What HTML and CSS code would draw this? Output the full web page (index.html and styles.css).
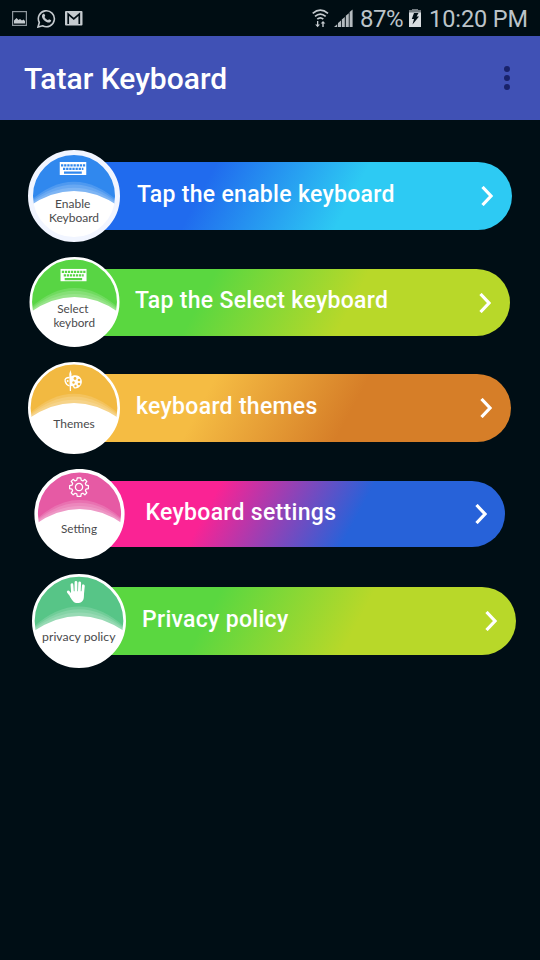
FILE: index.html
```html
<!DOCTYPE html>
<html lang="en">
<head>
    <meta charset="UTF-8">
    <meta name="viewport" content="width=device-width, initial-scale=1.0">
    <title>Tatar Keyboard</title>
    <link rel="stylesheet" href="styles.css">
</head>
<body>
    <!-- shapes shared by the round badges -->
    <svg class="defs" width="0" height="0">
        <defs>
            <clipPath id="round">
                <circle cx="46" cy="46" r="45"/>
            </clipPath>
            <symbol id="dome" viewBox="0 0 92 92">
                <circle cx="46" cy="46" r="45" fill="currentColor"/>
                <g fill="#fff" clip-path="url(#round)">
                    <path class="haze" d="M0 53 Q46 10.500 92 53 V92 H0Z"/>
                    <path class="haze" d="M0 54.500 Q46 14.500 92 54.500 V92 H0Z"/>
                    <path class="haze" d="M0 55.500 Q46 20 92 55.500 V92 H0Z"/>
                    <path d="M0 57 Q46 25 92 57 V92 H0Z"/>
                </g>
            </symbol>
            <symbol id="keys" viewBox="0 0 27 13">
                <rect width="27" height="13" fill="#fff"/>
                <g fill="none" stroke="currentColor">
                    <path d="M1.500 3.300H25.700" stroke-width="2.300" stroke-dasharray="2.300 .83"/>
                    <path d="M3.500 6.900H23.900" stroke-width="2.300" stroke-dasharray="2.300 .83"/>
                    <path d="M4.500 10.600H22.300" stroke-width="2.200"/>
                </g>
            </symbol>
        </defs>
    </svg>

    <div class="status-bar">
        <div class="notifications">
            <svg width="15" height="15" viewBox="0 0 15 15">
                <rect x=".6" y=".6" width="13.800" height="13.800" fill="none" stroke="#8d969c" stroke-width="1.200"/>
                <path d="M2 12.500V9.500L4.500 7L6.500 9L8 8L10 9.500L11.500 8.500L13 10V12.500Z" fill="#c5cbcf"/>
            </svg>
            <svg class="whatsapp" width="19" height="19" viewBox="0 0 19 19">
                <path d="M1 18L2.300 13.500A8 8 0 1 1 5.600 16.800Z" fill="none" stroke="#c5cbcf" stroke-width="1.600"/>
                <path d="M6 5C7 4.300 7.500 4.800 8.200 6.700L7.500 8C8.300 9.500 9.300 10.500 11 11.200L12 10.200L14.200 11.300C14 13.500 12 14 10 13.300C7.500 12.400 5.500 10 5 8C4.900 6.800 5.200 5.700 6 5Z" fill="#c5cbcf"/>
            </svg>
            <svg width="18" height="15" viewBox="0 0 18 15">
                <rect width="17.500" height="14.500" rx="1" fill="#c5cbcf"/>
                <path d="M3.200 13V3.200L8.750 8L14.300 3.200V13" fill="none" stroke="#000d14" stroke-width="1.700"/>
            </svg>
        </div>
        <div class="indicators">
            <svg width="17" height="19" viewBox="0 0 17 19">
                <g fill="none" stroke="#c5cbcf" stroke-width="1.700">
                    <path d="M.7 4.300Q8.300 -2 16 4.300"/>
                    <path d="M3 7.400Q8.300 2.800 13.700 7.400"/>
                    <path d="M5.300 10.200Q8.300 7.600 11.300 10.200"/>
                </g>
                <path d="M5 12H6.300V15.500H8L5.600 18.200L3.200 15.500H5ZM10.300 18V14.500H8.700L11 12L13.400 14.500H11.700V18Z" fill="#c5cbcf"/>
            </svg>
            <svg class="signal" width="19" height="18" viewBox="0 0 19 18">
                <path d="M0 18L3.200 15.300V18ZM4 18V14L7 11.500V18ZM7.800 18V10.500L10.800 8V18ZM11.800 18V6.800L14.800 4.300V18ZM15.600 18V3L18.600 .4V18Z" fill="#b4bbbf"/>
            </svg>
            <span class="percent">87%</span>
            <svg class="battery" width="12" height="18" viewBox="0 0 12 18">
                <path d="M3 0H9V1.500H12V18H0V1.500H3Z" fill="#d9dde0"/>
                <path d="M3 0H9V1.500H12V3.500H0V1.500H3Z" fill="#737b80"/>
                <path d="M5 4H9.500L7.600 7.500H10L3.500 15.500L5 10H2.800Z" fill="#000d14"/>
            </svg>
            <span class="clock">10:20 PM</span>
        </div>
    </div>

    <div class="app-bar">
        <h1>Tatar Keyboard</h1>
        <div class="menu">
            <i></i>
            <i></i>
            <i></i>
        </div>
    </div>

    <div class="menu-list">
        <div class="item enable">
            <svg class="badge" viewBox="0 0 92 92">
                <use href="#dome" width="92" height="92"/>
                <circle class="ring" cx="46" cy="46" r="43.500"/>
                <use href="#keys" x="31.500" y="12" width="27" height="13"/>
                <text x="44.700" y="57.500">Enable</text>
                <text x="46" y="72">Keyboard</text>
            </svg>
            <div class="bar">
                <span>Tap the enable keyboard</span>
                <svg class="arrow" viewBox="0 0 12 20"><path d="M1.500 1L10 10L1.500 19"/></svg>
            </div>
        </div>

        <div class="item select">
            <svg class="badge" viewBox="0 0 92 92">
                <use href="#dome" width="92" height="92"/>
                <circle class="ring" cx="46" cy="46" r="44.700"/>
                <use href="#keys" x="31.500" y="12" width="27" height="13"/>
                <text x="44.300" y="57.500">Select</text>
                <text x="45.700" y="72">keybord</text>
            </svg>
            <div class="bar">
                <span>Tap the Select keyboard</span>
                <svg class="arrow" viewBox="0 0 12 20"><path d="M1.500 1L10 10L1.500 19"/></svg>
            </div>
        </div>

        <div class="item themes">
            <svg class="badge" viewBox="0 0 92 92">
                <use href="#dome" width="92" height="92"/>
                <circle class="ring" cx="46" cy="46" r="44.700"/>
                <path d="M42 15C46 12 52 13 53.500 17.500C55 22 51.500 27 46.500 26.500C44.500 26 46.500 23.500 42 24Z" fill="#fff"/>
                <path d="M41.500 15.500C38 15.500 36.500 17 37.200 19.500C37.800 22 39 23 41.500 24" fill="none" stroke="#fff" stroke-width="1.300"/>
                <path d="M42.400 8L43.500 12L43 29H41.800L41.300 12Z" fill="#fff"/>
                <g fill="currentColor">
                    <circle cx="47" cy="16.500" r="1.400"/>
                    <circle cx="51" cy="18" r="1.300"/>
                    <circle cx="51" cy="22" r="1.300"/>
                    <circle cx="47.500" cy="24" r="1.200"/>
                    <circle cx="45.500" cy="20.500" r="1.200"/>
                </g>
                <circle cx="39.700" cy="19" r="1" fill="#fff"/>
                <text x="46" y="65.500">Themes</text>
            </svg>
            <div class="bar">
                <span>keyboard themes</span>
                <svg class="arrow" viewBox="0 0 12 20"><path d="M1.500 1L10 10L1.500 19"/></svg>
            </div>
        </div>

        <div class="item setting">
            <svg class="badge" viewBox="0 0 92 92">
                <use href="#dome" width="92" height="92"/>
                <circle class="ring" cx="46" cy="46" r="44.300"/>
                <g fill="none" stroke="#fff" stroke-width="1.300" stroke-linejoin="round" transform="translate(45.500 18.500)">
                    <path d="M-1.800 -9.500H1.800L2.300 -7L4 -6.300L6 -7.900L8 -5.800L6.500 -3.700L7.200 -2L9.600 -1.600V1.600L7.200 2L6.500 3.700L8 5.800L6 7.900L4 6.300L2.300 7L1.800 9.500H-1.800L-2.300 7L-4 6.300L-6 7.900L-8 5.800L-6.500 3.700L-7.200 2L-9.600 1.600V-1.600L-7.200 -2L-6.500 -3.700L-8 -5.800L-6 -7.900L-4 -6.300L-2.300 -7Z"/>
                    <circle r="3.700"/>
                </g>
                <text x="45.500" y="65">Setting</text>
            </svg>
            <div class="bar">
                <span>Keyboard settings</span>
                <svg class="arrow" viewBox="0 0 12 20"><path d="M1.500 1L10 10L1.500 19"/></svg>
            </div>
        </div>

        <div class="item privacy">
            <svg class="badge" viewBox="0 0 92 92">
                <use href="#dome" width="92" height="92"/>
                <circle class="ring" cx="46" cy="46" r="44.700"/>
                <g fill="none" stroke="#fff" stroke-width="2.700" stroke-linecap="round">
                    <path d="M39.800 20L39.100 10.500M43 18V8.300M46.300 18L46.700 8.700M49.500 20L50.300 11.500M39 22L35.500 17.500"/>
                </g>
                <path d="M38.500 17H50.800V22C50.800 26.500 48 28.500 44.500 28.500C41 28.500 39.800 26.500 37 22Z" fill="#fff"/>
                <text x="45.800" y="65.500">privacy policy</text>
            </svg>
            <div class="bar">
                <span>Privacy policy</span>
                <svg class="arrow" viewBox="0 0 12 20"><path d="M1.500 1L10 10L1.500 19"/></svg>
            </div>
        </div>
    </div>
</body>
</html>
```
FILE: styles.css
```css
body {
    margin: 0;
    height: 960px;
    background-color: #000e15;
    font-family: Roboto, sans-serif;
    overflow: hidden;
}
svg {
    display: block;
    flex-shrink: 0;
}
.defs {
    height: 0;
}
.status-bar {
    height: 36px;
    box-sizing: border-box;
    padding: 0 12px;
    display: flex;
    justify-content: space-between;
    align-items: center;
    background-color: #000d13;
    color: #bcc4c9;
    font-size: 24px;
    line-height: 36px;
}
.notifications {
    display: flex;
    align-items: center;
    gap: 9.5px;
}
.indicators {
    display: flex;
    align-items: center;
}
.signal {
    margin: 0 7px 0 5px;
}
.battery {
    margin: 0 8px 0 6px;
}
.percent {
    padding-top: 2px;
    letter-spacing: -0.5px;
}
.clock {
    padding-top: 2px;
    font-size: 23.5px;
    letter-spacing: -0.1px;
}
.app-bar {
    height: 84px;
    box-sizing: border-box;
    padding: 0 30px 0 24px;
    display: flex;
    justify-content: space-between;
    align-items: center;
    background-color: #4051b5;
}
h1 {
    margin: 0;
    color: #fff;
    font-size: 30px;
    font-weight: 500;
}
.menu {
    display: flex;
    flex-direction: column;
    gap: 3px;
}
.menu i {
    width: 6px;
    height: 6px;
    border-radius: 50%;
    background-color: #19226a;
}
.menu-list {
    padding-top: 30px;
    display: flex;
    flex-direction: column;
    gap: 15px;
}
.item {
    display: flex;
    align-items: center;
}
.badge {
    width: 92px;
    height: 92px;
    z-index: 1;
}
.badge text {
    font-family: Lato, sans-serif;
    font-size: 12px;
    text-anchor: middle;
    fill: #4a4a4c;
}
.haze {
    opacity: 0.15;
}
.ring {
    fill: none;
    stroke: #fff;
    stroke-width: 2.6px;
}
.bar {
    flex: 1;
    height: 67.5px;
    box-sizing: border-box;
    margin-left: -30px;
    padding: 0 19.5px 0 47px;
    border-radius: 0 34px 34px 0;
    display: flex;
    align-items: center;
    justify-content: space-between;
    background-image: linear-gradient(118deg, var(--from) 112px, var(--to) 248px);
}
.bar span {
    padding-bottom: 4px;
    color: #fff;
    font-size: 23px;
    font-weight: 500;
    letter-spacing: 0.3px;
    white-space: nowrap;
}
.arrow {
    width: 12px;
    height: 20px;
    fill: none;
    stroke: #fff;
    stroke-width: 3.2px;
}

.enable {
    --from: #206bee;
    --to: #2dcaf3;
    color: #3088ee;
    padding: 0 28px;
}
.enable .ring {
    stroke: #f1f5ff;
    stroke-width: 5px;
}
.select {
    --from: #5ad740;
    --to: #b8d829;
    color: #58d544;
    padding: 0 30px 0 29px;
}
.select .badge {
    width: 91px;
    height: 90px;
}
.select .bar {
    margin-top: 1px;
    padding-left: 45px;
}
.themes {
    --from: #f5bc43;
    --to: #d67e28;
    color: #f2b941;
    padding: 0 29px 0 28px;
}
.themes .bar {
    padding-left: 46px;
}
.setting {
    --from: #fa2394;
    --to: #2762d9;
    color: #e65aa4;
    padding: 0 35px 0 34px;
}
.setting .badge {
    width: 91px;
    height: 90px;
}
.setting .bar {
    height: 66px;
    padding: 0 18.5px 0 50.5px;
}
.setting .ring {
    stroke-width: 3.6px;
}
.privacy {
    --from: #5ad740;
    --to: #b8d829;
    color: #57c587;
    padding: 0 24px 0 32px;
}
.privacy .badge {
    width: 94px;
    height: 94px;
}
.privacy .bar {
    padding: 0 19px 0 46px;
}
```
